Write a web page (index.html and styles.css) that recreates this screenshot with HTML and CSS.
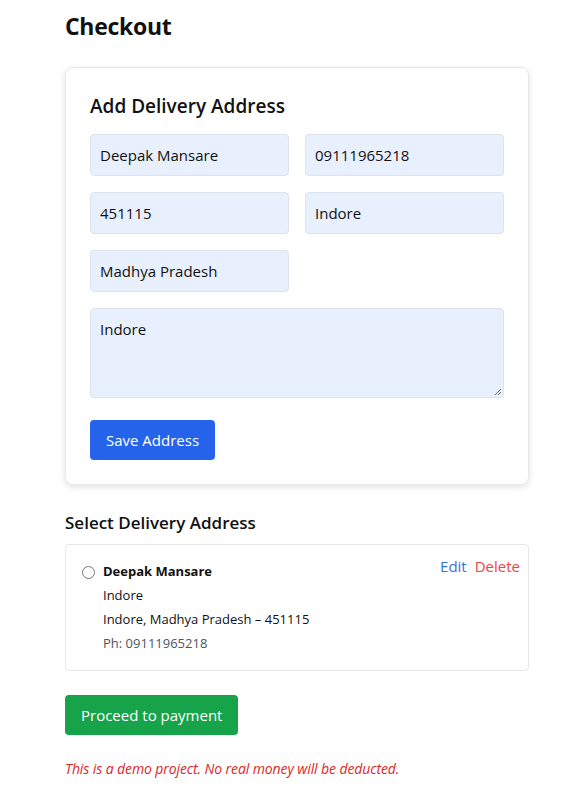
FILE: index.html
```html
<!DOCTYPE html>
<html>
<head>
<meta charset="utf-8">
<link rel="stylesheet" href="styles.css">
</head>
<body>
<main class="page">
  <h1 class="title">Checkout</h1>
  <section class="card">
    <h2 class="card-title">Add Delivery Address</h2>
    <div class="grid">
      <div class="field">Deepak Mansare</div>
      <div class="field">09111965218</div>
      <div class="field">451115</div>
      <div class="field">Indore</div>
      <div class="field">Madhya Pradesh</div>
    </div>
    <div class="textarea">Indore
      <svg class="grip" width="8" height="8" viewBox="0 0 8 8"><path d="M7 1L1 7M7 4L4 7" stroke="#555" stroke-width="0.9"/></svg>
    </div>
    <button class="btn btn-blue">Save Address</button>
  </section>

  <h3 class="sub-title">Select Delivery Address</h3>
  <div class="address">
    <span class="radio"></span>
    <div class="addr-body">
      <div class="addr-name">Deepak Mansare</div>
      <div class="addr-line">Indore</div>
      <div class="addr-line">Indore, Madhya Pradesh – 451115</div>
      <div class="addr-phone">Ph: 09111965218</div>
    </div>
    <div class="actions">
      <span class="edit">Edit</span>
      <span class="delete">Delete</span>
    </div>
  </div>

  <button class="btn btn-green">Proceed to payment</button>
  <p class="note">This is a demo project. No real money will be deducted.</p>
</main>
</body>
</html>
```

FILE: styles.css
```css
* { box-sizing: border-box; }
body {
  margin: 0;
  font-family: "Open Sans", "Noto Sans", sans-serif;
  color: #111;
  background: #fff;
}
.page {
  width: 464px;
  margin-left: 65px;
  padding-top: 10px;
}
.title {
  font-size: 23px;
  font-weight: 700;
  margin: 0;
  line-height: 32px;
  letter-spacing: -0.3px;
}
.card {
  margin-top: 25px;
  border: 1px solid #e5e7eb;
  border-radius: 8px;
  box-shadow: 0 2px 6px rgba(0,0,0,0.12);
  padding: 24px 24px 24px 24px;
}
.card-title {
  font-size: 19px;
  font-weight: 600;
  margin: 0 0 14px 0;
  line-height: 28px;
}
.grid {
  display: grid;
  grid-template-columns: 1fr 1fr;
  gap: 16px;
}
.field, .textarea {
  background: #e8f0fe;
  border: 1px solid #dde3ea;
  border-radius: 4px;
  height: 42px;
  padding: 0 9px;
  display: flex;
  align-items: center;
  font-size: 15px;
  color: #111;
}
.textarea {
  margin-top: 16px;
  height: 90px;
  align-items: flex-start;
  padding-top: 10px;
  position: relative;
}
.grip {
  position: absolute;
  right: 1px;
  bottom: 1px;
}
.btn {
  border: none;
  border-radius: 4px;
  color: #fff;
  font-family: inherit;
  font-size: 15px;
  height: 40px;
  padding: 0 16px;
  display: block;
}
.btn-blue {
  background: #2563eb;
  margin-top: 22px;
}
.btn-green {
  background: #16a34a;
  margin-top: 24px;
}
.sub-title {
  font-size: 17px;
  font-weight: 600;
  margin: 25px 0 0 0;
  line-height: 26px;
}
.address {
  margin-top: 8px;
  border: 1px solid #e5e7eb;
  border-radius: 4px;
  padding: 14px 8px 15px 16px;
  display: flex;
  align-items: flex-start;
}
.radio {
  width: 13px;
  height: 13px;
  border: 1px solid #767676;
  border-radius: 50%;
  margin-top: 7px;
  flex: none;
}
.addr-body {
  margin-left: 8px;
  flex: 1;
  font-size: 13px;
  line-height: 24px;
}
.addr-name { font-weight: 700; }
.addr-phone { color: #4b5563; }
.actions {
  display: flex;
  gap: 8px;
  font-size: 15px;
  line-height: 20px;
  margin-top: -3px;
}
.edit { color: #3b6fe0; }
.delete { color: #ef4444; }
.note {
  margin: 24px 0 0 0;
  font-size: 14px;
  font-style: italic;
  color: #dc2626;
  letter-spacing: -0.1px;
}
```
